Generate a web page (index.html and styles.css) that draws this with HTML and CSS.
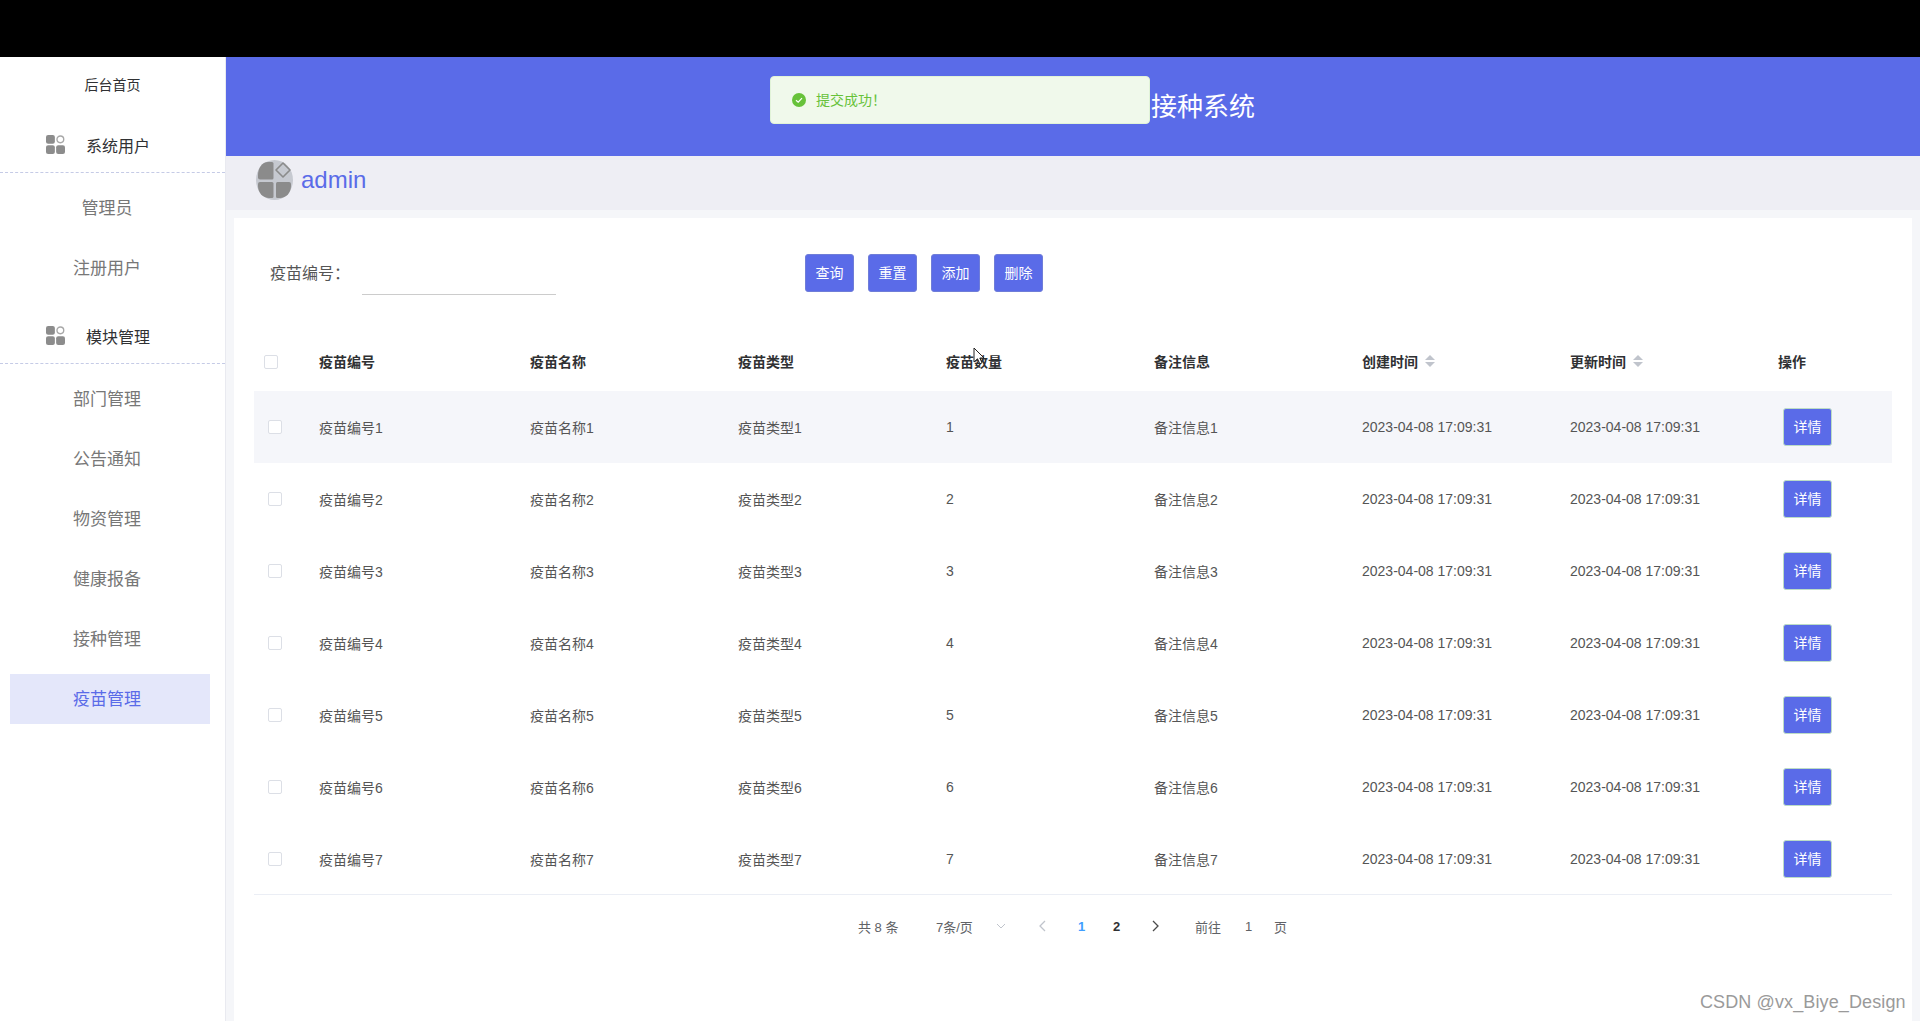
FILE: index.html
```html
<!DOCTYPE html>
<html lang="zh-CN">
<head>
<meta charset="utf-8">
<title>接种系统</title>
<link rel="stylesheet" href="styles.css">
</head>
<body>
<svg class="defs" width="0" height="0"><defs>
<symbol id="apps" viewBox="0 0 18 18">
<rect x="0" y="0" width="8.4" height="8.4" rx="2" fill="#8c8c8c"/>
<circle cx="13.6" cy="4.1" r="3.2" fill="none" stroke="#a8a8a8" stroke-width="1.3"/>
<rect x="0" y="9.6" width="8.4" height="8.4" rx="2" fill="#8c8c8c"/>
<rect x="9.6" y="9.6" width="8.4" height="8.4" rx="2" fill="#8c8c8c"/>
</symbol>
</defs></svg>
<div class="topbar"></div>
<div class="shell">
  <aside class="sidebar">
    <div class="home">后台首页</div>
    <div class="group"><svg class="group-icon"><use href="#apps"/></svg><span>系统用户</span></div>
    <ul class="menu">
      <li class="menu-item">管理员</li>
      <li class="menu-item">注册用户</li>
    </ul>
    <div class="group group-second"><svg class="group-icon"><use href="#apps"/></svg><span>模块管理</span></div>
    <ul class="menu">
      <li class="menu-item">部门管理</li>
      <li class="menu-item">公告通知</li>
      <li class="menu-item">物资管理</li>
      <li class="menu-item">健康报备</li>
      <li class="menu-item">接种管理</li>
      <li class="menu-item active">疫苗管理</li>
    </ul>
  </aside>
  <main class="main">
    <header class="banner"><h1 class="title">接种系统</h1></header>
    <div class="userbar">
      <svg class="avatar" viewBox="0 0 37 40">
        <ellipse cx="18.5" cy="20" rx="18.5" ry="20" fill="#c6c9d0"/>
        <path d="M4 19.500 H16 Q17.500 19.500 17.500 18 V3.500 Q17.500 2 16 2 H12 C6 2 2 8 2 15 V17.500 Q2 19.500 4 19.500Z" fill="#8b8b8b"/>
        <path d="M27 3 L34 10 L27 17 L20 10Z" fill="#c6c9d0" stroke="#8b8b8b" stroke-width="1.600" stroke-linejoin="round"/>
        <path d="M4 22 H16 Q17.500 22 17.500 23.500 V36.500 Q17.500 38 16 38 H13 C7 38 2 33 2 26 V24 Q2 22 4 22Z" fill="#8b8b8b"/>
        <path d="M21.500 22 H33 Q35 22 35 24 V26 C35 33 30 38 24 38 H21.500 Q20 38 20 36.500 V23.500 Q20 22 21.500 22Z" fill="#8b8b8b"/>
      </svg>
      <span class="username">admin</span>
    </div>
    <section class="card">
      <div class="search">
        <label class="search-label">疫苗编号：</label>
        <div class="search-input"></div>
        <div class="actions">
          <button class="btn">查询</button>
          <button class="btn">重置</button>
          <button class="btn">添加</button>
          <button class="btn">删除</button>
        </div>
      </div>
      <div class="table">
        <div class="row head">
          <span class="check check-head"></span><span>疫苗编号</span><span>疫苗名称</span><span>疫苗类型</span><span>疫苗数量</span><span>备注信息</span>
          <span class="sortable">创建时间<i class="sort"></i></span><span class="sortable">更新时间<i class="sort"></i></span><span>操作</span>
        </div>
        <div class="row hover"><span class="check"></span><span>疫苗编号1</span><span>疫苗名称1</span><span>疫苗类型1</span><span>1</span><span>备注信息1</span><span>2023-04-08 17:09:31</span><span>2023-04-08 17:09:31</span><span><button class="btn btn-detail">详情</button></span></div>
        <div class="row"><span class="check"></span><span>疫苗编号2</span><span>疫苗名称2</span><span>疫苗类型2</span><span>2</span><span>备注信息2</span><span>2023-04-08 17:09:31</span><span>2023-04-08 17:09:31</span><span><button class="btn btn-detail">详情</button></span></div>
        <div class="row"><span class="check"></span><span>疫苗编号3</span><span>疫苗名称3</span><span>疫苗类型3</span><span>3</span><span>备注信息3</span><span>2023-04-08 17:09:31</span><span>2023-04-08 17:09:31</span><span><button class="btn btn-detail">详情</button></span></div>
        <div class="row"><span class="check"></span><span>疫苗编号4</span><span>疫苗名称4</span><span>疫苗类型4</span><span>4</span><span>备注信息4</span><span>2023-04-08 17:09:31</span><span>2023-04-08 17:09:31</span><span><button class="btn btn-detail">详情</button></span></div>
        <div class="row"><span class="check"></span><span>疫苗编号5</span><span>疫苗名称5</span><span>疫苗类型5</span><span>5</span><span>备注信息5</span><span>2023-04-08 17:09:31</span><span>2023-04-08 17:09:31</span><span><button class="btn btn-detail">详情</button></span></div>
        <div class="row"><span class="check"></span><span>疫苗编号6</span><span>疫苗名称6</span><span>疫苗类型6</span><span>6</span><span>备注信息6</span><span>2023-04-08 17:09:31</span><span>2023-04-08 17:09:31</span><span><button class="btn btn-detail">详情</button></span></div>
        <div class="row last"><span class="check"></span><span>疫苗编号7</span><span>疫苗名称7</span><span>疫苗类型7</span><span>7</span><span>备注信息7</span><span>2023-04-08 17:09:31</span><span>2023-04-08 17:09:31</span><span><button class="btn btn-detail">详情</button></span></div>
      </div>
      <nav class="pager">
        <span class="pager-total">共 8 条</span>
        <span class="pager-size">7条/页</span>
        <svg class="chev chev-down" viewBox="0 0 10 6"><path d="M1 1 L5 5 L9 1" fill="none" stroke="#c0c4cc" stroke-width="1"/></svg>
        <svg class="chev chev-prev" viewBox="0 0 7 12"><path d="M6 1 L1 6 L6 11" fill="none" stroke="#c0c4cc" stroke-width="1.300"/></svg>
        <span class="page current">1</span>
        <span class="page">2</span>
        <svg class="chev chev-next" viewBox="0 0 7 12"><path d="M1 1 L6 6 L1 11" fill="none" stroke="#4a4a4a" stroke-width="1.300"/></svg>
        <span class="pager-goto">前往</span>
        <span class="pager-input">1</span>
        <span class="pager-unit">页</span>
      </nav>
    </section>
  </main>
</div>
<div class="toast">
  <svg class="toast-icon" viewBox="0 0 14 14"><circle cx="7" cy="7" r="7" fill="#67c23a"/><path d="M4 7.200 L6.200 9.200 L10 5.200" fill="none" stroke="#fff" stroke-width="1.200"/></svg>
  <span class="toast-text">提交成功！</span>
</div>
<svg class="cursor" viewBox="0 0 12 18"><path d="M1 1 V15 L4.500 11.800 L6.800 16.800 L9 15.800 L6.800 11 L11 11 Z" fill="#fff" stroke="#222" stroke-width="1"/></svg>
<div class="watermark">CSDN @vx_Biye_Design</div>
</body>
</html>
```
FILE: styles.css
```css
* { box-sizing: border-box; }
html, body { margin: 0; padding: 0; height: 1021px; overflow: hidden; background: #fff; }
body { position: relative; font-family: "Liberation Sans", "Noto Sans CJK SC", sans-serif; font-size: 14px; color: #555; }
.defs { position: absolute; }
.topbar { height: 57px; background: #000; }
.shell { display: flex; height: 964px; }

.sidebar { width: 226px; flex: none; background: #fff; border-right: 1px solid #e9eaf0; }
.home { height: 54px; display: flex; align-items: center; justify-content: center; font-size: 14px; color: #303133; }
.group { height: 55px; margin-top: 7px; padding: 0 0 1px 46px; display: flex; align-items: center; gap: 21px; font-size: 16px; color: #303133; border-bottom: 1px dashed #c5cbe6; }
.group-second { margin-top: 16px; }
.group-icon { width: 19px; height: 19px; flex: none; }
.menu { list-style: none; margin: 0; padding: 10px 0 0; display: flex; flex-direction: column; gap: 10px; }
.menu-item { height: 50px; margin-left: 10px; width: 200px; padding: 0 6px 3px 0; display: flex; align-items: center; justify-content: center; font-size: 17px; color: #777; }
.menu-item.active { background: #e4e7fa; color: #5a6be8; }

.main { flex: 1; min-width: 0; display: flex; flex-direction: column; background: #f5f6f9; }
.banner { height: 99px; flex: none; background: #5a6be8; display: flex; align-items: center; padding-left: 925px; }
.title { margin: 0; font-size: 26px; font-weight: 400; color: #fff; line-height: 1; }
.userbar { height: 54px; flex: none; background: #eeeef4; display: flex; align-items: center; gap: 8px; padding: 0 0 6px 30px; }
.avatar { width: 37px; height: 40px; flex: none; }
.username { font-size: 24px; color: #5a6be8; }

.card { flex: 1; margin: 8px 8px 0; background: #fff; padding: 0 20px; }
.search { height: 108px; margin-bottom: 7px; padding-left: 16px; display: flex; align-items: center; }
.search-label { width: 92px; flex: none; font-size: 16px; color: #555; }
.search-input { width: 194px; height: 38px; flex: none; border-bottom: 1px solid #ccc; margin-top: 8px; }
.actions { margin: 2px 0 0 249px; display: flex; gap: 14px; }
.btn { width: 49px; height: 38px; padding: 0 0 2px; border: 1px solid #6f7dd8; border-radius: 3px; background: #5a6be8; color: #fff; font: inherit; font-size: 14px; }

.row { display: grid; grid-template-columns: 65px 211px repeat(6, 208px) 114px; align-items: center; height: 72px; color: #555; }
.row > span { white-space: nowrap; }
.head { height: 58px; padding-bottom: 2px; font-weight: 700; color: #303133; }
.hover { background: #f5f6fa; }
.last { border-bottom: 1px solid #ebeef5; }
.check { display: block; width: 14px; height: 14px; margin-left: 14px; background: #fff; border: 1px solid #dcdfe6; border-radius: 2px; }
.check-head { margin: 2px 0 0 10px; }
.sortable { display: flex; align-items: center; }
.sort { display: inline-block; width: 10px; height: 12px; margin-left: 7px; position: relative; }
.sort::before, .sort::after { content: ""; position: absolute; left: 0; border-left: 5px solid transparent; border-right: 5px solid transparent; }
.sort::before { top: 0; border-bottom: 5px solid #c0c4cc; }
.sort::after { bottom: 0; border-top: 5px solid #c0c4cc; }
.btn-detail { margin-left: 5px; border-color: #bcdcc6; display: block; }

.pager { display: flex; align-items: center; height: 62px; padding-left: 604px; font-size: 13px; color: #606266; }
.pager-total { width: 78px; }
.pager-size { width: 60px; }
.chev { flex: none; }
.chev-down { width: 10px; height: 6px; margin-right: 33px; }
.chev-prev { width: 7px; height: 12px; margin-right: 32px; }
.page { width: 7px; font-weight: 700; color: #303133; margin-right: 28px; }
.page.current { color: #409eff; }
.chev-next { width: 7px; height: 12px; margin-right: 36px; margin-left: 4px; }
.pager-goto { width: 50px; }
.pager-input { width: 29px; }

.toast { position: absolute; left: 770px; top: 76px; width: 380px; height: 48px; display: flex; align-items: center; gap: 10px; padding-left: 22px; background: #f0f9eb; border: 1px solid #e1f3d8; border-radius: 4px; color: #67c23a; font-size: 14px; }
.toast-icon { width: 14px; height: 14px; flex: none; margin-left: -1px; }
.toast-text { margin-top: -2px; }
.cursor { position: absolute; left: 973px; top: 347px; width: 12px; height: 18px; }
.watermark { position: absolute; left: 1700px; top: 992px; font-size: 18px; letter-spacing: 0.12px; color: #9a9a9a; white-space: nowrap; }
```
